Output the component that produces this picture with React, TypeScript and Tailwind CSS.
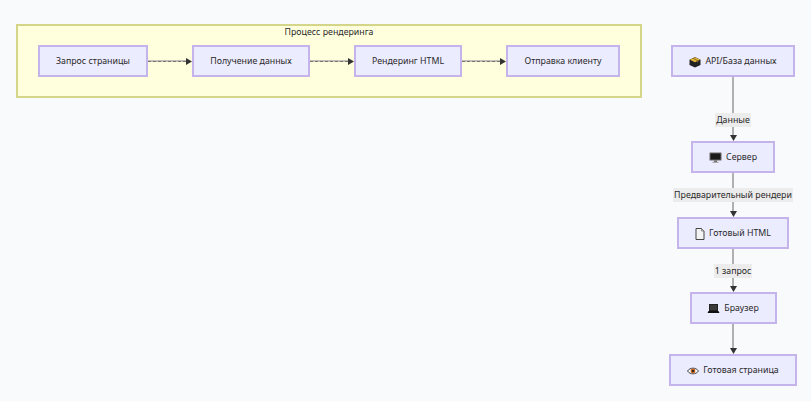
import React from "react";

function Node({ w, children }: { w: string; children: React.ReactNode }) {
  return (
    <div
      className={`${w} h-8 shrink-0 flex items-center justify-center gap-1 pt-px bg-[#ececff] border-2 border-[#c5b3ec] text-[#2a2a2a]`}
    >
      {children}
    </div>
  );
}

function EdgeH({ w }: { w: string }) {
  return (
    <div className={`${w} shrink-0 flex items-center`}>
      <div className="flex-1 h-[2px] bg-[#c0c0b8] flex items-center">
        <div className="w-full border-t border-dashed border-[#77776f]" />
      </div>
      <svg width="6" height="7" viewBox="0 0 6 7" className="shrink-0">
        <path d="M0 0L6 3.5L0 7Z" fill="#333333" />
      </svg>
    </div>
  );
}

function EdgeV({ h, label, labelPad }: { h: string; label?: string; labelPad?: string }) {
  return (
    <div className={`${h} w-full relative flex flex-col items-center shrink-0`}>
      <div className="flex-1 w-[2px] bg-[#b0b0b0]" />
      <svg width="7" height="6" viewBox="0 0 7 6" className="shrink-0">
        <path d="M0 0L7 0L3.5 6Z" fill="#333333" />
      </svg>
      {label && (
        <div className={`absolute inset-0 ${labelPad ?? ""} flex items-center justify-center`}>
          <span className="bg-[#ececec] h-[14px] leading-[15px] px-px text-[#2a2a2a] whitespace-nowrap">
            {label}
          </span>
        </div>
      )}
    </div>
  );
}

const PackageIcon = () => (
  <svg width="12" height="12" viewBox="0 0 12 12">
    <path d="M0.5 3.8L6 1L11.5 3.8V9L6 11.5L0.5 9Z" fill="#222222" />
    <path d="M1 3.8L6 1.3L11 3.8L6 6.3Z" fill="#e8b93a" />
    <path d="M3.5 2.6L8.2 5L8.2 6.4L9.2 5.9V4.5L4.6 2.1Z" fill="#8a6a1e" />
  </svg>
);

const MonitorIcon = () => (
  <svg width="13" height="11" viewBox="0 0 13 11">
    <rect x="0.5" y="0.5" width="12" height="8" rx="0.5" fill="#666666" />
    <rect x="1.5" y="1.5" width="10" height="6" fill="#1a1a1a" />
    <rect x="5" y="8.5" width="3" height="1.5" fill="#666666" />
    <rect x="3.5" y="9.8" width="6" height="1" fill="#999999" />
  </svg>
);

const PageIcon = () => (
  <svg width="10" height="12" viewBox="0 0 10 12">
    <path d="M1 0.5H6.5L9 3V11.5H1Z" fill="#f4f4f4" stroke="#333333" strokeWidth="0.9" />
    <path d="M6.5 0.5V3H9" fill="#cccccc" stroke="#555555" strokeWidth="0.6" />
  </svg>
);

const LaptopIcon = () => (
  <svg width="13" height="11" viewBox="0 0 13 11">
    <rect x="2" y="1" width="9" height="7" fill="#222222" />
    <rect x="3" y="2" width="7" height="5" fill="#3a3a3a" />
    <path d="M1.5 8H11.5L12.5 10H0.5Z" fill="#111111" />
  </svg>
);

const EyeIcon = () => (
  <svg width="12" height="10" viewBox="0 0 12 10">
    <path d="M0.5 5C3 1.2 9 1.2 11.5 5C9 8.8 3 8.8 0.5 5Z" fill="#f8f8f8" stroke="#333333" strokeWidth="0.9" />
    <circle cx="6" cy="5" r="2.4" fill="#c2611f" />
    <circle cx="6" cy="5" r="1.1" fill="#1a1a1a" />
  </svg>
);

export default function App() {
  return (
    <div className="w-[811px] h-[401px] overflow-hidden bg-[#f9fafc] flex items-start font-['Noto_Sans',sans-serif] text-[8.8px]">
      {/* Процесс рендеринга */}
      <div className="ml-4 mt-6 w-[626px] h-[74px] shrink-0 bg-[#ffffde] border-2 border-[#d5d58a]">
        <div className="h-[19px] text-center leading-[13px] text-[#2a2a2a]">Процесс рендеринга</div>
        <div className="flex pl-[20px]">
          <Node w="w-[110px]">Запрос страницы</Node>
          <EdgeH w="w-[44px]" />
          <Node w="w-[118px]">Получение данных</Node>
          <EdgeH w="w-[44px]" />
          <Node w="w-[108px]">Рендеринг HTML</Node>
          <EdgeH w="w-[44px]" />
          <Node w="w-[114px]">Отправка клиенту</Node>
        </div>
      </div>

      {/* Поток данных */}
      <div className="ml-[27px] mt-[45px] w-[128px] shrink-0 flex flex-col items-center">
        <Node w="w-[124px]">
          <PackageIcon />
          <span>API/База данных</span>
        </Node>
        <EdgeV h="h-[64px]" label="Данные" labelPad="pt-[22px]" />
        <Node w="w-[84px]">
          <MonitorIcon />
          <span>Сервер</span>
        </Node>
        <EdgeV h="h-[44px]" label="Предварительный рендери" />
        <Node w="w-[112px]">
          <PageIcon />
          <span>Готовый HTML</span>
        </Node>
        <EdgeV h="h-[43px]" label="1 запрос" />
        <Node w="w-[87px]">
          <LaptopIcon />
          <span>Браузер</span>
        </Node>
        <EdgeV h="h-[30px]" />
        <Node w="w-[128px]">
          <EyeIcon />
          <span>Готовая страница</span>
        </Node>
      </div>
    </div>
  );
}
